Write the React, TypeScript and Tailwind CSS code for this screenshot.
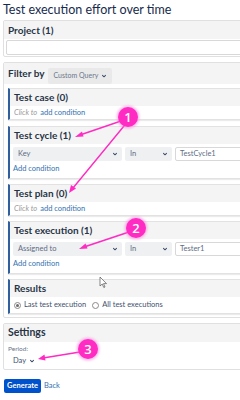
import React from "react";

const Chevron = ({ className = "" }: { className?: string }) => (
  <svg viewBox="0 0 10 10" className={`w-[6px] h-[6px] ${className}`} fill="none">
    <path d="M2.5 3.8 L5 6.3 L7.5 3.8" stroke="#42526e" strokeWidth="1.7" strokeLinecap="round" strokeLinejoin="round" />
  </svg>
);

function Section({ title, children }: { title: string; children: React.ReactNode }) {
  return (
    <div className="border border-[#e2e2e2] border-l-[2px] border-l-[#2f5f9e] shadow-[0_1px_1px_rgba(0,0,0,0.08)] bg-white">
      <div className="h-[17px] bg-[#f4f4f4] flex items-center pl-[4px] text-[10px] font-bold text-[#283447]">
        {title}
      </div>
      {children}
    </div>
  );
}

function ClickToAdd() {
  return (
    <div className="h-[13px] flex items-center pl-[4px] text-[7.5px]">
      <span className="italic text-[#9a9a9a]">Click to</span>
      <span className="ml-[3px] text-[#3572b0]">add condition</span>
    </div>
  );
}

function ConditionRow({ field, value }: { field: string; value: string }) {
  return (
    <div className="pl-[3px] pt-[3px]">
      <div className="flex gap-[3px] h-[14px]">
        <div className="w-[109px] bg-[#eef0f2] rounded-[2px] flex items-center justify-between pl-[5px] pr-[4px] text-[7.5px] text-[#5e6c84]">
          <span>{field}</span>
          <Chevron />
        </div>
        <div className="w-[47px] bg-[#eef0f2] rounded-[2px] flex items-center justify-between pl-[5px] pr-[4px] text-[7.5px] text-[#5e6c84]">
          <span>In</span>
          <Chevron />
        </div>
        <div className="w-[80px] border border-[#d8d8d8] rounded-[2px] flex items-center px-[4px] text-[7.5px] text-[#5e6c84]">
          {value}
        </div>
      </div>
      <div className="h-[17px] flex items-center text-[7.5px] text-[#3572b0] pb-[1px]">Add condition</div>
    </div>
  );
}

function Radio({ checked, label }: { checked?: boolean; label: string }) {
  return (
    <div className="flex items-center gap-[3px]">
      <span className="w-[7px] h-[7px] rounded-full border border-[#8a8a8a] flex items-center justify-center bg-white">
        {checked && <span className="w-[3px] h-[3px] rounded-full bg-[#6b6b6b]" />}
      </span>
      <span>{label}</span>
    </div>
  );
}

export default function App() {
  return (
    <div className="relative w-[240px] h-[400px] overflow-hidden bg-white font-['Lato','Open_Sans',sans-serif] text-[#283447]">
      <div className="h-[20px] pl-[3px] flex items-center text-[12.5px] text-[#172b4d] whitespace-nowrap">
        Test execution effort over time
      </div>

      <div className="ml-[3px] w-[270px] border border-[#e0e0e0] rounded-[2px]">
        <div className="h-[18px] bg-[#f4f4f4] flex items-center pl-[4px] text-[10px] font-bold">Project (1)</div>
        <div className="px-[2px] py-[1px]">
          <div className="h-[15px] border border-[#d8d8d8] rounded-[2px]" />
        </div>
      </div>

      <div className="mt-[5px] ml-[3px] w-[270px] border border-[#e0e0e0] rounded-[2px] pb-[3px]">
        <div className="h-[21px] bg-[#f4f4f4] flex items-center pl-[4px] gap-[4px]">
          <span className="text-[10px] font-bold">Filter by</span>
          <span className="h-[16px] mt-[4px] px-[5px] bg-[#e9e9e9] rounded-[2px] flex items-center gap-[3px] text-[7px] text-[#6b778c]">
            Custom Query <Chevron />
          </span>
        </div>
        <div className="flex flex-col pl-[4px] pt-[4px] gap-[5px]">
          <Section title="Test case (0)">
            <ClickToAdd />
          </Section>
          <div className="mt-[1px]">
            <Section title="Test cycle (1)">
              <ConditionRow field="Key" value="TestCycle1" />
            </Section>
          </div>
          <Section title="Test plan (0)">
            <ClickToAdd />
          </Section>
          <Section title="Test execution (1)">
            <ConditionRow field="Assigned to" value="Tester1" />
          </Section>
          <Section title="Results">
            <div className="h-[16px] flex items-center gap-[6px] pl-[4px] text-[7.5px] text-[#42526e]">
              <Radio checked label="Last test execution" />
              <Radio label="All test executions" />
            </div>
          </Section>
        </div>
      </div>

      <div className="mt-[5px] ml-[3px] w-[270px] border border-[#e0e0e0] rounded-[2px] h-[47px]">
        <div className="h-[18px] bg-[#f4f4f4] flex items-center pl-[4px] text-[10.5px] font-bold">Settings</div>
        <div className="pl-[4px] pt-[2px] text-[6.5px] text-[#6b778c] leading-[10px]">Period:</div>
        <div className="pl-[9px] pt-[1px] flex items-center gap-[3px] text-[7.5px] text-[#42526e]">
          Day <Chevron />
        </div>
      </div>

      <div className="mt-[9px] ml-[4px] flex items-center gap-[3px]">
        <button className="w-[37px] h-[14px] bg-[#0052cc] rounded-[2px] text-white text-[7.5px] font-bold flex items-center justify-center">
          Generate
        </button>
        <span className="text-[7.5px] text-[#3572b0]">Back</span>
      </div>

      <svg className="absolute left-0 top-0 pointer-events-none" width="240" height="400" viewBox="0 0 240 400">
        <defs>
          <filter id="glow" x="-50%" y="-50%" width="200%" height="200%">
            <feGaussianBlur stdDeviation="1" />
          </filter>
        </defs>
        <g stroke="#ff2bc2" strokeWidth="1.4" fill="#ff2bc2" strokeLinecap="round">
          <line x1="121" y1="121" x2="80" y2="135" />
          <polygon points="75,137 82,131.5 83.5,136.5" stroke="none" />
          <line x1="124" y1="126" x2="73" y2="188" />
          <polygon points="69,193 71,185 76,188.5" stroke="none" />
          <line x1="129" y1="232" x2="84" y2="247" />
          <polygon points="79,249 85.5,243.5 87.5,248.5" stroke="none" />
          <line x1="80" y1="352" x2="43" y2="358" />
          <polygon points="38,359 44.5,354.5 45.5,360.5" stroke="none" />
        </g>
        <g>
          <circle cx="128" cy="117" r="11.5" fill="#ff7ad9" opacity="0.5" filter="url(#glow)" />
          <circle cx="128" cy="117" r="10" fill="#ff2bc2" />
          <text x="128" y="121.5" textAnchor="middle" fontSize="13" fontFamily="Open Sans, sans-serif" fontWeight="600" fill="white">1</text>
          <circle cx="136" cy="228" r="11.5" fill="#ff7ad9" opacity="0.5" filter="url(#glow)" />
          <circle cx="136" cy="228" r="10" fill="#ff2bc2" />
          <text x="136" y="232.5" textAnchor="middle" fontSize="13" fontFamily="Open Sans, sans-serif" fontWeight="600" fill="white">2</text>
          <circle cx="88" cy="349" r="11.5" fill="#ff7ad9" opacity="0.5" filter="url(#glow)" />
          <circle cx="88" cy="349" r="10" fill="#ff2bc2" />
          <text x="88" y="353.5" textAnchor="middle" fontSize="13" fontFamily="Open Sans, sans-serif" fontWeight="600" fill="white">3</text>
        </g>
        <path d="M100 277 L100 286 L102.2 284 L103.8 287.5 L105 287 L103.5 283.6 L106.5 283.6 Z" fill="white" stroke="#555" strokeWidth="0.7" strokeLinejoin="round" />
      </svg>
    </div>
  );
}
